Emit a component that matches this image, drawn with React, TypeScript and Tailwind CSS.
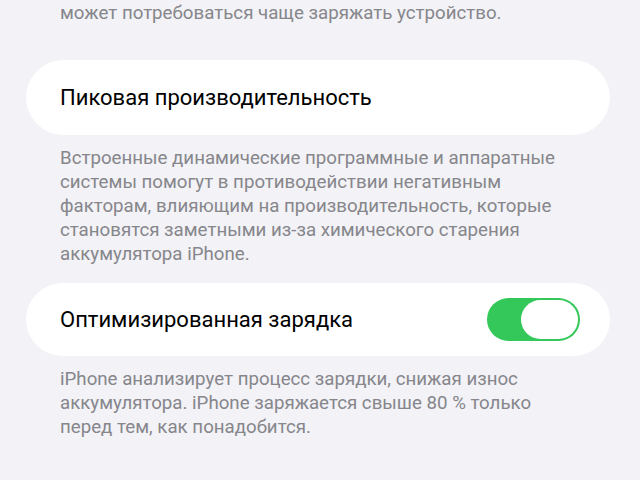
import React from "react";

const Toggle: React.FC = () => {
  return (
    <div className="w-[93px] h-[43px] rounded-full bg-[#34c759] p-[2px] flex justify-end">
      <div className="w-[57px] h-[39px] rounded-full bg-white" />
    </div>
  );
};

const Footer: React.FC<{ lines: string[] }> = ({ lines }) => (
  <p className="px-[60px] text-[18.7px] leading-[24px] text-[#86868b] whitespace-nowrap">
    {lines.map((l, i) => (
      <React.Fragment key={i}>
        {l}
        {i < lines.length - 1 && <br />}
      </React.Fragment>
    ))}
  </p>
);

export default function App() {
  return (
    <div
      className="w-[640px] h-[480px] overflow-hidden bg-[#f2f2f7]"
      style={{ fontFamily: "Roboto, 'Noto Sans', sans-serif" }}
    >
      <div className="-mt-[23px]">
        <Footer
          lines={[
            "Более низкая ёмкость аккумулятора означает, что",
            "может потребоваться чаще заряжать устройство.",
          ]}
        />
      </div>

      <div className="ml-[26px] mr-[30px] mt-[35px] h-[75px] rounded-[38px] bg-white flex items-center px-[34px]">
        <span className="text-[22px] text-black">Пиковая производительность</span>
      </div>

      <div className="mt-[11px]">
        <Footer
          lines={[
            "Встроенные динамические программные и аппаратные",
            "системы помогут в противодействии негативным",
            "факторам, влияющим на производительность, которые",
            "становятся заметными из-за химического старения",
            "аккумулятора iPhone.",
          ]}
        />
      </div>

      <div className="ml-[26px] mr-[30px] mt-[17px] h-[73px] rounded-[37px] bg-white flex items-center justify-between pl-[34px] pr-[30px]">
        <span className="text-[22px] text-black">Оптимизированная зарядка</span>
        <Toggle />
      </div>

      <div className="mt-[11px]">
        <Footer
          lines={[
            "iPhone анализирует процесс зарядки, снижая износ",
            "аккумулятора. iPhone заряжается свыше 80 % только",
            "перед тем, как понадобится.",
          ]}
        />
      </div>
    </div>
  );
}
